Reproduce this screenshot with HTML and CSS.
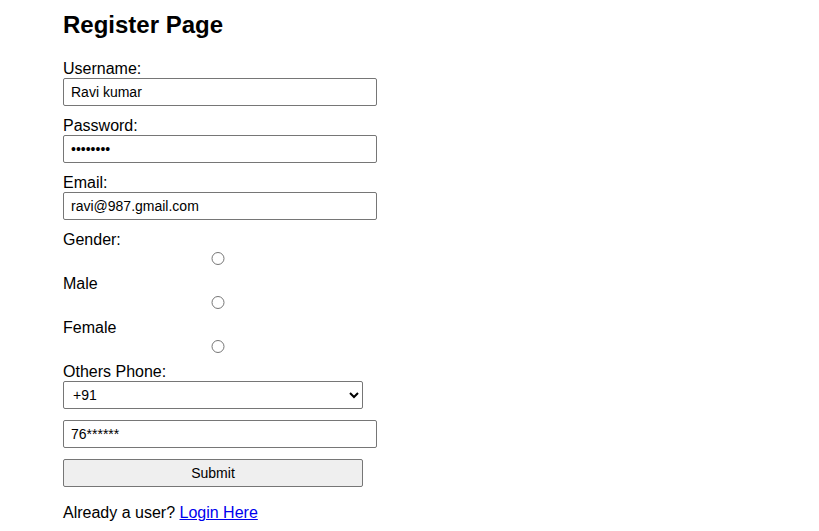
FILE: index.html
```html
<!DOCTYPE html>
<html>
<head>
<meta charset="utf-8">
<link rel="stylesheet" href="styles.css">
</head>
<body>
<div class="page">
  <h2 class="title">Register Page</h2>
  <form class="form">
    <div class="field">
      <label class="label">Username:</label>
      <input class="text-input" type="text" value="Ravi kumar">
    </div>
    <div class="field">
      <label class="label">Password:</label>
      <input class="text-input" type="password" value="ravi1234">
    </div>
    <div class="field">
      <label class="label">Email:</label>
      <input class="text-input" type="email" value="ravi@987.gmail.com">
    </div>
    <div class="gender">
      <span class="label">Gender:</span>
      <input class="radio" type="radio" name="g">
      <label class="label">Male</label>
      <input class="radio" type="radio" name="g">
      <label class="label">Female</label>
      <input class="radio" type="radio" name="g">
      <label class="label">Others Phone:</label>
    </div>
    <select class="select-input">
      <option>+91</option>
    </select>
    <input class="text-input phone" type="text" value="76******">
    <button class="submit" type="button">Submit</button>
  </form>
  <p class="login">Already a user? <a href="#" class="link">Login Here</a></p>
</div>
</body>
</html>
```
FILE: styles.css
```css
html, body {
  margin: 0;
  padding: 0;
  background: #ffffff;
}
.page {
  padding: 11px 0 0 63px;
  font-family: Arial, "Liberation Sans", sans-serif;
  color: #000;
}
.title {
  margin: 0 0 20px 0;
  font-size: 24px;
  line-height: 28px;
  font-weight: bold;
}
.form {
  margin: 0;
}
.field {
  margin-bottom: 10px;
}
.label {
  display: block;
  font-size: 16px;
  line-height: 19px;
}
.text-input {
  display: block;
  box-sizing: border-box;
  width: 314px;
  height: 28px;
  margin: 0;
  padding: 0 7px;
  border: 1px solid #767676;
  border-radius: 2px;
  font-family: Arial, "Liberation Sans", sans-serif;
  font-size: 14px;
  color: #000;
}
.radio {
  display: block;
  width: 310px;
  height: 13px;
  margin: 3px 0 9px 0;
}
.select-input {
  display: block;
  box-sizing: border-box;
  width: 300px;
  height: 28px;
  margin: 0;
  padding: 0 5px;
  border: 1px solid #767676;
  border-radius: 2px;
  background: #fff;
  font-family: Arial, "Liberation Sans", sans-serif;
  font-size: 14px;
  color: #000;
}
.phone {
  margin-top: 11px;
}
.submit {
  display: block;
  box-sizing: border-box;
  width: 300px;
  height: 28px;
  margin: 11px 0 0 0;
  border: 1px solid #767676;
  border-radius: 2px;
  background: #efefef;
  font-family: Arial, "Liberation Sans", sans-serif;
  font-size: 14px;
  color: #000;
}
.login {
  margin: 16px 0 0 0;
  font-size: 16px;
  line-height: 19px;
}
.link {
  color: #0000ee;
  text-decoration: underline;
}
```
